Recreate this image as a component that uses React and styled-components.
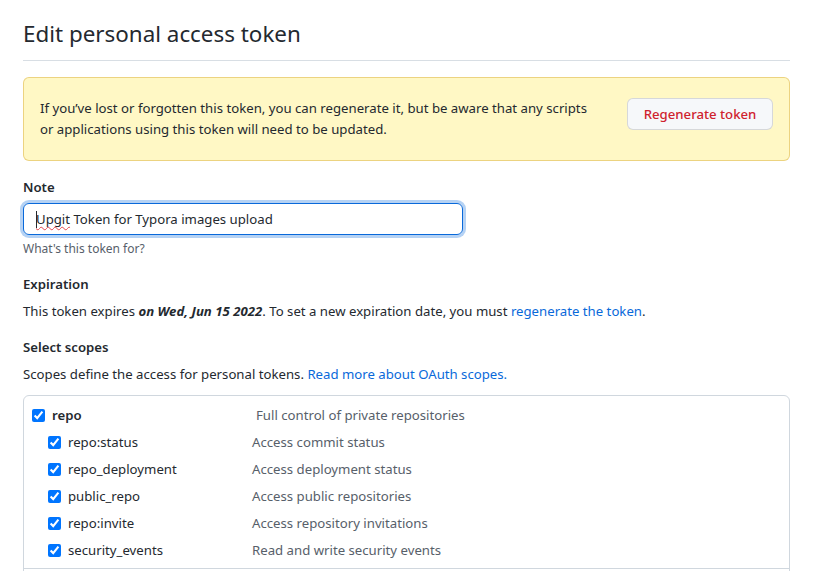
import React from "react";
import styled, { createGlobalStyle } from "styled-components";

const GlobalStyle = createGlobalStyle`
  body {
    margin: 0;
    font-family: "Noto Sans", "Liberation Sans", sans-serif;
    font-size: 13.2px;
    line-height: 1.5;
    color: #24292f;
    background: #ffffff;
  }
`;

const Page = styled.div`
  padding: 16px 28px 0 23px;
`;

const Subhead = styled.h2`
  margin: 0;
  padding-bottom: 8px;
  font-size: 22.4px;
  font-weight: 400;
  line-height: 36px;
  border-bottom: 1px solid #d8dee4;
`;

const Flash = styled.div`
  margin-top: 16px;
  display: flex;
  justify-content: space-between;
  align-items: flex-start;
  gap: 16px;
  padding: 20px 16px;
  background: #fff8c5;
  border: 1px solid rgba(212, 167, 44, 0.45);
  border-radius: 6px;
`;

const FlashText = styled.p`
  margin: 0;
  line-height: 21px;
`;

const DangerButton = styled.button`
  flex-shrink: 0;
  width: 146px;
  height: 32px;
  padding: 0;
  white-space: nowrap;
  font-family: inherit;
  font-size: 13.2px;
  font-weight: 500;
  color: #cf222e;
  background: #f6f8fa;
  border: 1px solid rgba(31, 35, 40, 0.15);
  border-radius: 6px;
  cursor: pointer;
`;

const Label = styled.div`
  margin-top: ${({ $top }) => $top}px;
  font-weight: 600;
  line-height: 21px;
`;

const FakeInput = styled.div`
  margin-top: 5px;
  width: 440px;
  height: 32px;
  box-sizing: border-box;
  display: flex;
  align-items: center;
  padding: 0 12px;
  border: 1px solid #0969da;
  border-radius: 6px;
  box-shadow: 0 0 0 3px rgba(9, 105, 218, 0.3);
  line-height: 20px;
  white-space: pre;
`;

const Caret = styled.span`
  display: inline-block;
  width: 1px;
  height: 17px;
  background: #24292f;
  margin-right: -1px;
`;

const Misspelled = styled.span`
  text-decoration: underline wavy #e5484d;
  text-decoration-thickness: 1px;
  text-underline-offset: 2px;
  text-decoration-skip-ink: none;
`;

const Note = styled.div`
  margin-top: 5px;
  font-size: 12px;
  line-height: 18px;
  color: #57606a;
`;

const Text = styled.p`
  margin: 6px 0 0;
  line-height: 21px;
`;

const Link = styled.a`
  color: #0969da;
  text-decoration: none;
`;

const ScopesBox = styled.div`
  margin-top: 10px;
  border: 1px solid #d0d7de;
  border-radius: 6px;
`;

const Group = styled.div`
  min-height: 27px;
  padding: 6px 0 4px;
  & + & {
    border-top: 1px solid #d0d7de;
  }
`;

const Row = styled.label`
  display: flex;
  align-items: center;
  height: 27px;
  padding-left: ${({ $sub }) => ($sub ? 24 : 8)}px;
`;

const Check = styled.input`
  width: 13px;
  height: 13px;
  margin: 0 7px 0 0;
`;

const ScopeName = styled.span`
  width: ${({ $sub }) => ($sub ? 184 : 204)}px;
  font-weight: ${({ $sub }) => ($sub ? 400 : 600)};
`;

const ScopeDesc = styled.span`
  color: #57606a;
`;

const scopes = [
  { name: "repo", desc: "Full control of private repositories" },
  { name: "repo:status", desc: "Access commit status", sub: true },
  { name: "repo_deployment", desc: "Access deployment status", sub: true },
  { name: "public_repo", desc: "Access public repositories", sub: true },
  { name: "repo:invite", desc: "Access repository invitations", sub: true },
  { name: "security_events", desc: "Read and write security events", sub: true },
];

const ScopeRow = ({ scope }) => (
  <Row $sub={scope.sub}>
    <Check type="checkbox" checked readOnly />
    <ScopeName $sub={scope.sub}>{scope.name}</ScopeName>
    <ScopeDesc>{scope.desc}</ScopeDesc>
  </Row>
);

const App = () => {
  return (
    <>
      <GlobalStyle />
      <Page>
        <Subhead>Edit personal access token</Subhead>

        <Flash>
          <FlashText>
            If you’ve lost or forgotten this token, you can regenerate it, but be aware that any scripts
            <br />
            or applications using this token will need to be updated.
          </FlashText>
          <DangerButton>Regenerate token</DangerButton>
        </Flash>

        <Label $top={16}>Note</Label>
        <FakeInput>
          <Caret />
          <Misspelled>Upgit</Misspelled> Token for Typora images upload
        </FakeInput>
        <Note>What's this token for?</Note>

        <Label $top={16}>Expiration</Label>
        <Text>
          This token expires <b><i>on Wed, Jun 15 2022</i></b>. To set a new expiration date, you must{" "}
          <Link href="#">regenerate the token</Link>.
        </Text>

        <Label $top={15}>Select scopes</Label>
        <Text>
          Scopes define the access for personal tokens.{" "}
          <Link href="#">Read more about OAuth scopes.</Link>
        </Text>

        <ScopesBox>
          <Group>
            {scopes.map((s) => (
              <ScopeRow key={s.name} scope={s} />
            ))}
          </Group>
          <Group />
        </ScopesBox>
      </Page>
    </>
  );
};

export default App;
